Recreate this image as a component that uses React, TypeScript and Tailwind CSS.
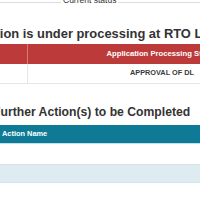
export default function App() {
  return (
    <div className="w-[200px] h-[200px] overflow-hidden bg-white text-[#333] font-['Liberation_Sans',Arial,sans-serif]">
      {/* Current status legend */}
      <div className="flex items-center h-[5px]">
        <div className="w-[61px] h-px bg-[#dcdcdc] shrink-0" />
        <span className="px-[2px] text-[8.5px] leading-[10px] text-[#333] whitespace-nowrap -mt-[5px]">Current status</span>
        <div className="flex-1 h-px bg-[#dcdcdc]" />
      </div>

      <h2 className="mt-[21px] -ml-[51px] text-[12.9px] leading-[16px] font-bold whitespace-nowrap">
        Application is under processing at RTO Level
      </h2>

      {/* status table */}
      <div className="mt-[2px] w-[300px]">
        <div className="flex h-[20px] bg-[#bd3a3b] text-white text-[7.7px] font-bold">
          <div className="w-[28px] shrink-0 border-r border-[#d97777]" />
          <div className="w-[268px] flex items-center justify-center whitespace-nowrap">Application Processing Status</div>
        </div>
        <div className="flex h-[20px] border-b border-[#e6e6e6] text-[7.3px] font-bold text-[#3a3a3a]">
          <div className="w-[28px] shrink-0 border-r border-[#e6e6e6]" />
          <div className="w-[268px] flex items-center justify-center whitespace-nowrap">APPROVAL OF DL</div>
        </div>
      </div>

      <h2 className="mt-[20px] -ml-[7px] text-[12.2px] leading-[16px] font-bold whitespace-nowrap">
        Further Action(s) to be Completed
      </h2>

      {/* actions table */}
      <div className="mt-[5px]">
        <div className="h-[19px] bg-[#0f7a96] text-white text-[7.4px] font-bold flex items-center pl-[2px] border-b border-[#bfe3ec]">
          Action Name
        </div>
        <div className="h-[20px] bg-white" />
        <div className="h-[19px] bg-[#deebf1] border-y border-[#d6e3ea]" />
        <div className="h-[20px] bg-white" />
      </div>
    </div>
  );
}
